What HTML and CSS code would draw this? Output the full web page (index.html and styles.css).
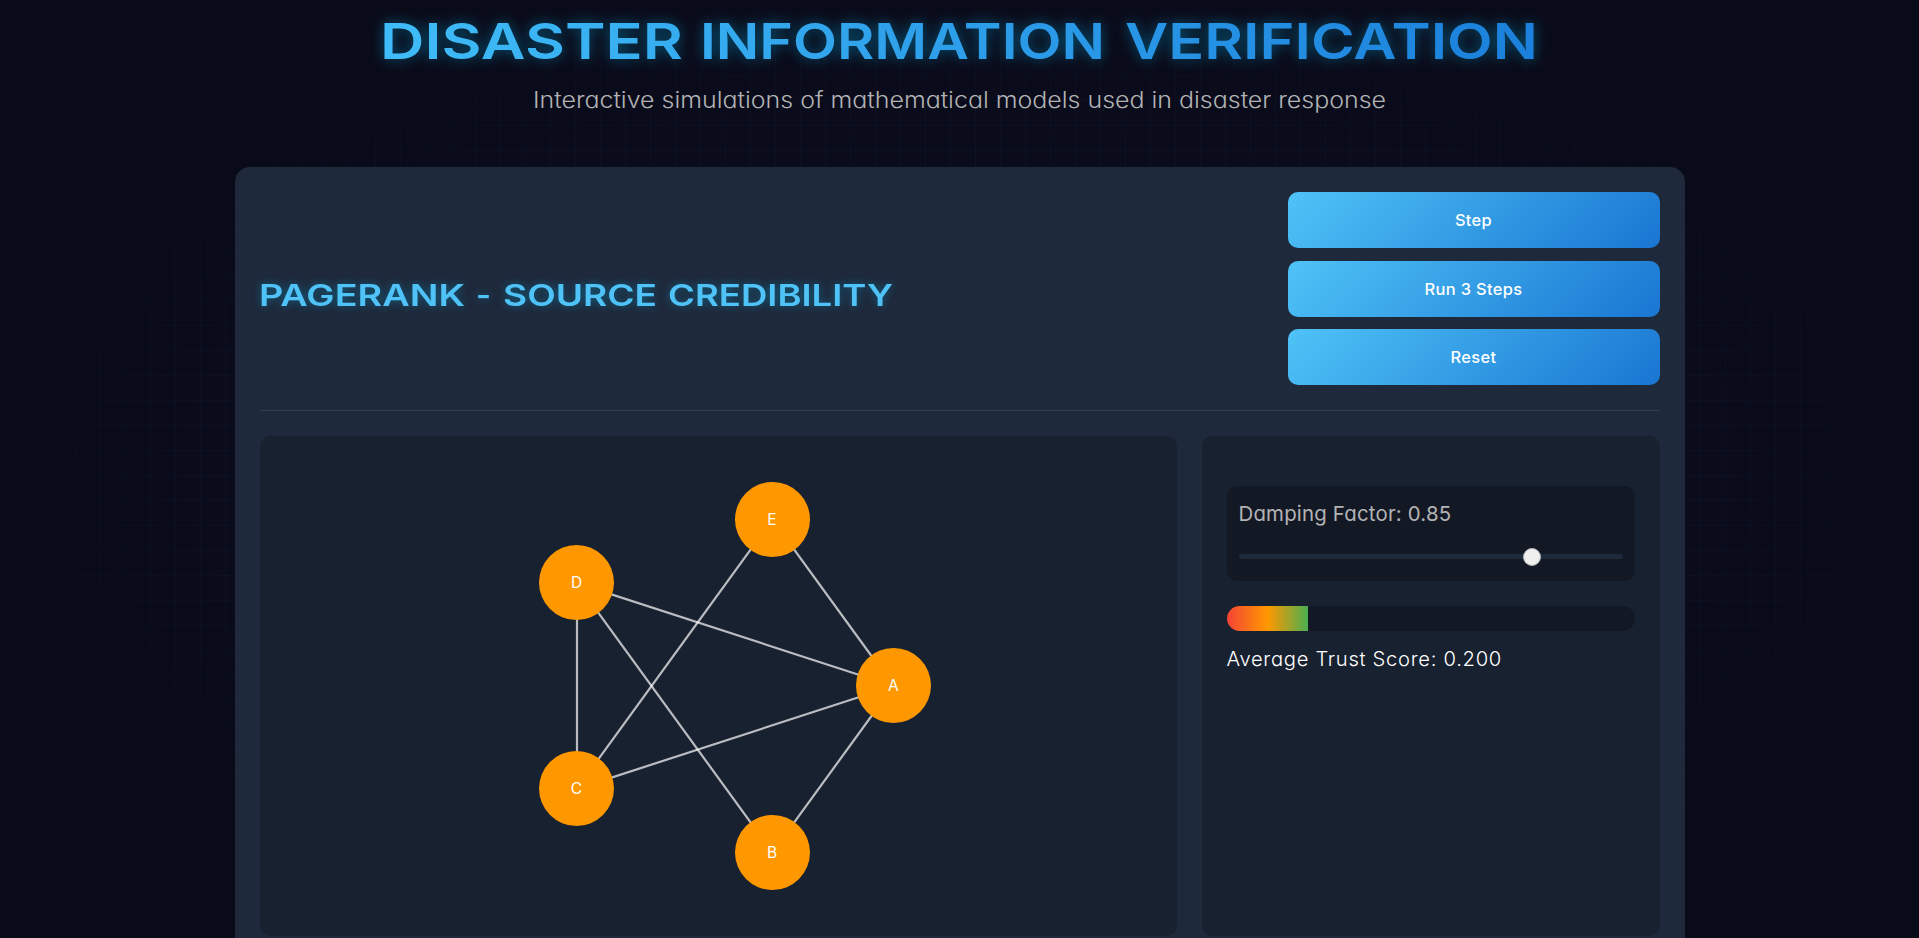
FILE: index.html
```html
<!DOCTYPE html>
<html lang="en">
<head>
<meta charset="utf-8">
<title>Disaster Information Verification</title>
<link rel="stylesheet" href="styles.css">
</head>
<body>
<header class="hero">
  <h1 class="hero-title">
    <svg class="hero-svg" width="1200" height="80" viewBox="0 0 1200 80">
      <defs>
        <linearGradient id="titleFill" gradientUnits="userSpaceOnUse" x1="0" y1="0" x2="1200" y2="80">
          <stop offset="0" stop-color="#40bdf8"/><stop offset="1" stop-color="#1a7fdb"/>
        </linearGradient>
      </defs>
      <g fill="url(#titleFill)">
        <text x="20" y="59" textLength="303" lengthAdjust="spacingAndGlyphs">DISASTER</text>
        <text x="340" y="59" textLength="405" lengthAdjust="spacingAndGlyphs">INFORMATION</text>
        <text x="765" y="59" textLength="413" lengthAdjust="spacingAndGlyphs">VERIFICATION</text>
      </g>
    </svg>
  </h1>
  <p class="hero-sub"><svg width="860" height="36"><text x="3" y="27.5" textLength="853" lengthAdjust="spacingAndGlyphs">Interactive simulations of mathematical models used in disaster response</text></svg></p>
</header>
<main class="card">
  <div class="card-head">
    <h2 class="card-title">
      <svg width="640" height="44">
        <text x="-1" y="33" textLength="206" lengthAdjust="spacingAndGlyphs">PAGERANK</text>
        <text x="216" y="33" textLength="15" lengthAdjust="spacingAndGlyphs">-</text>
        <text x="243" y="33" textLength="154" lengthAdjust="spacingAndGlyphs">SOURCE</text>
        <text x="408" y="33" textLength="225" lengthAdjust="spacingAndGlyphs">CREDIBILITY</text>
      </svg>
    </h2>
    <div class="actions">
      <button class="btn">Step</button>
      <button class="btn">Run 3 Steps</button>
      <button class="btn">Reset</button>
    </div>
  </div>
  <div class="panels">
    <section class="panel graph">
      <svg width="917" height="500" viewBox="0 0 917 500">
        <g class="edges">
          <line x1="512.4" y1="83.6" x2="633.3" y2="250"/>
          <line x1="512.4" y1="83.6" x2="316.8" y2="352.9"/>
          <line x1="316.8" y1="147.1" x2="633.3" y2="250"/>
          <line x1="317" y1="147.1" x2="317" y2="352.9"/>
          <line x1="316.8" y1="147.1" x2="512.4" y2="416.4"/>
          <line x1="316.8" y1="352.9" x2="633.3" y2="250"/>
          <line x1="633.3" y1="250" x2="512.4" y2="416.4"/>
        </g>
        <g class="nodes">
          <circle cx="633.5" cy="249.5" r="37.5"/><text x="633.3" y="255">A</text>
          <circle cx="512.5" cy="416.5" r="37.5"/><text x="512.2" y="422">B</text>
          <circle cx="316.5" cy="352.5" r="37.5"/><text x="316.4" y="358">C</text>
          <circle cx="316.5" cy="146.5" r="37.5"/><text x="316.6" y="152">D</text>
          <circle cx="512.5" cy="83.5" r="37.5"/><text x="512" y="89">E</text>
        </g>
      </svg>
    </section>
    <section class="panel side">
      <div class="control">
        <label class="control-label">Damping Factor: 0.85</label>
        <div class="slider"><div class="thumb"></div></div>
      </div>
      <div class="meter"><div class="meter-fill"></div></div>
      <p class="score">Average Trust Score: 0.200</p>
    </section>
  </div>
</main>
</body>
</html>
```
FILE: styles.css
```css
* { box-sizing: border-box; }
html { height: 100%; overflow: hidden; }
body {
  display: flex;
  flex-direction: column;
  margin: 0;
  height: 100%;
  overflow: hidden;
  color: #fff;
  font-family: Inter, "Open Sans", sans-serif;
  font-feature-settings: "cv11";
  background:
    radial-gradient(ellipse at 50% 50%, transparent 0, rgba(10, 11, 25, 0.5) 45%, #0a0b19 80%),
    repeating-linear-gradient(180deg, rgba(79, 195, 247, 0.07) 0 1px, transparent 1px 25px),
    repeating-linear-gradient(90deg, rgba(79, 195, 247, 0.07) 0 1px, transparent 1px 25px),
    #0a0c1e;
}
svg { display: block; overflow: visible; }
.hero { flex: none; height: 167px; }
.hero-title { margin: 0; display: flex; justify-content: center; }
.hero-svg {
  font-size: 49.5px;
  font-weight: 600;
  filter: drop-shadow(0 0 7px rgba(0, 180, 240, 0.45));
}
.hero-sub {
  margin: 0;
  display: flex;
  justify-content: center;
  font-size: 22.4px;
  font-weight: 300;
}
.hero-sub text { fill: #b3b3b5; }
.card {
  flex: 1;
  width: 1450px;
  margin: 0 auto;
  padding: 25px 25px 0;
  border-radius: 15px 15px 0 0;
  background: #1e293b;
}
.card-head {
  display: flex;
  align-items: center;
  justify-content: space-between;
  height: 219px;
  padding-bottom: 25px;
  border-bottom: 1px solid #323d4d;
}
.card-title { margin: 0; padding-top: 13px; font-size: 30px; font-weight: 600; }
.card-title svg { filter: drop-shadow(0 0 4px rgba(0, 180, 240, 0.4)); }
.card-title text { fill: #4fc3f7; }
.actions { display: flex; flex-direction: column; gap: 12.3px; width: 372px; }
.btn {
  height: 56px;
  border: 0;
  border-radius: 10px;
  background: linear-gradient(135deg, #4fc3f7, #1976d2);
  color: #fff;
  font: 500 16.4px Inter, "Open Sans", sans-serif;
  letter-spacing: 0.35px;
}
.panels {
  display: grid;
  grid-template-columns: 917px 458px;
  gap: 25px;
  margin-top: 25px;
}
.panel { height: 500px; border-radius: 10px; background: #18212f; }
.edges { stroke: rgba(255, 255, 255, 0.7); stroke-width: 2.2; }
.nodes circle { fill: #ff9800; }
.nodes text { fill: #fff; font-size: 15.5px; text-anchor: middle; }
.side { padding: 50px 25px 25px; }
.control {
  height: 95px;
  padding: 12px;
  border-radius: 10px;
  background: #131924;
}
.control-label {
  display: block;
  height: 56px;
  line-height: 32px;
  color: #b3b3b5;
  font-size: 20.4px;
  letter-spacing: 0.2px;
}
.slider {
  display: flex;
  align-items: center;
  height: 5px;
  padding-left: 284px;
  border-radius: 3px;
  background: #1e293b;
}
.thumb {
  width: 18px;
  height: 18px;
  border: 1px solid #b2b2b2;
  border-radius: 50%;
  background: #efefef;
}
.meter {
  height: 25px;
  margin-top: 25px;
  overflow: hidden;
  border-radius: 12.5px;
  background: #131924;
}
.meter-fill {
  width: 20%;
  height: 100%;
  background: linear-gradient(90deg, #f44336, #ff9800, #4caf50);
}
.score {
  margin: 12px 0 0;
  line-height: 32px;
  font-size: 20.2px;
  font-weight: 300;
  letter-spacing: 0.7px;
}
```
